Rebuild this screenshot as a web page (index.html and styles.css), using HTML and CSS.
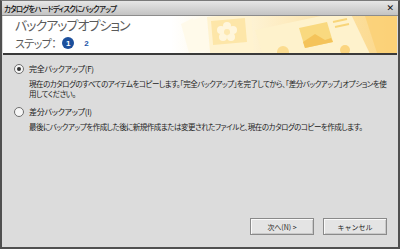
FILE: index.html
```html
<!DOCTYPE html>
<html lang="ja">
<head>
    <meta charset="UTF-8">
    <title>カタログをハードディスクにバックアップ</title>
    <link rel="stylesheet" href="styles.css">
</head>
<body>
    <div class="window">
        <div class="titlebar">
            <span class="title">カタログをハードディスクにバックアップ</span>
            <span class="close">&#x2715;</span>
        </div>

        <!-- Header -->
        <div class="header">
            <div class="header-text">
                <div class="heading">バックアップオプション</div>
                <div class="steps">
                    <span class="step-label">ステップ：</span>
                    <span class="step current">1</span>
                    <span class="step">2</span>
                </div>
            </div>
            <svg class="header-art" width="226" height="37" viewBox="0 0 226 37">
                <defs>
                    <linearGradient id="fade" x1="0" x2="1" y1="0" y2="0">
                        <stop offset="0" stop-color="#ffffff"/>
                        <stop offset="0.3" stop-color="#fef5da"/>
                        <stop offset="1" stop-color="#fbd685"/>
                    </linearGradient>
                </defs>
                <rect width="226" height="37" fill="url(#fade)"/>
                <g fill="#fffaea">
                    <polygon points="10,8 22,2 30,34 18,37"/>
                    <polygon points="22,4 34,0 38,32 28,36"/>
                </g>
                <rect x="36" y="1" width="44" height="42" fill="#fff3d0" transform="rotate(-5 36 1)"/>
                <rect x="40" y="5" width="34" height="24" fill="#fde6a8" transform="rotate(-5 40 5)"/>
                <g fill="#fff6dc">
                    <circle cx="56" cy="10" r="4"/>
                    <circle cx="50" cy="14" r="4"/>
                    <circle cx="62" cy="14" r="4"/>
                    <circle cx="52" cy="21" r="4"/>
                    <circle cx="60" cy="21" r="4"/>
                </g>
                <circle cx="56" cy="16" r="3" fill="#fde8b0"/>
                <polygon points="84,14 178,-6 200,40 96,52" fill="#fef2cc"/>
                <polygon points="128,12 156,6 162,26 134,32" fill="#f9d97f"/>
                <polygon points="132,26 144,18 154,24 160,22 162,26 134,32" fill="#f4c35a"/>
                <g stroke="#f8d57a" stroke-width="2">
                    <line x1="162" y1="6" x2="176" y2="3"/>
                    <line x1="164" y1="11" x2="178" y2="8"/>
                </g>
                <circle cx="112" cy="36" r="6" fill="#fbdc90"/>
                <circle cx="174" cy="34" r="5" fill="#fbd57f"/>
                <polygon points="194,0 226,0 226,37 206,37" fill="#fbcf70" opacity="0.7"/>
            </svg>
        </div>

        <!-- Options -->
        <div class="content">
            <div class="option">
                <label class="radio-row"><span class="radio checked"></span>完全バックアップ(F)</label>
                <p class="desc">現在のカタログのすべてのアイテムをコピーします。「完全バックアップ」を完了してから、「差分バックアップ」オプションを使用してください。</p>
            </div>
            <div class="option">
                <label class="radio-row"><span class="radio"></span>差分バックアップ(I)</label>
                <p class="desc">最後にバックアップを作成した後に新規作成または変更されたファイルと、現在のカタログのコピーを作成します。</p>
            </div>
        </div>

        <div class="buttons">
            <button class="btn">次へ(N) &gt;</button>
            <button class="btn">キャンセル</button>
        </div>
    </div>
</body>
</html>
```

FILE: styles.css
```css
html, body {
    margin: 0;
    padding: 0;
    width: 400px;
    height: 249px;
    overflow: hidden;
}
body {
    font-family: "Noto Sans CJK JP", sans-serif;
    font-feature-settings: "palt";
    color: #222;
}
.window {
    box-sizing: border-box;
    width: 400px;
    height: 249px;
    display: flex;
    flex-direction: column;
    background: #dcdcdc;
    border: 2px solid #505050;
    border-top: 1px solid #7a7a7a;
}
.titlebar {
    height: 14px;
    display: flex;
    align-items: center;
    justify-content: space-between;
    padding: 0 4px 0 2px;
    background: linear-gradient(#e6e6e6, #c3c3c3);
    border-bottom: 1px solid #8c8c8c;
}
.title {
    font-size: 7.5px;
    font-weight: 500;
    letter-spacing: -0.8px;
    color: #111;
}
.close {
    font-size: 9px;
    font-weight: bold;
    color: #111;
    font-family: "DejaVu Sans", sans-serif;
}
.header {
    display: flex;
    margin: 0 1px;
    height: 37px;
    background: #fff;
    border-bottom: 2px solid #3a3a3a;
}
.header-text {
    flex: 1;
    padding: 0 0 0 12px;
}
.heading {
    font-size: 13px;
    line-height: 17px;
    color: #5a5a5a;
    letter-spacing: -1px;
}
.steps {
    display: flex;
    align-items: center;
    gap: 6px;
    margin-top: 2px;
}
.step-label {
    font-size: 11px;
    color: #5a5a5a;
    letter-spacing: -0.6px;
}
.step {
    font-family: "Liberation Sans", sans-serif;
    font-size: 8px;
    font-weight: bold;
    color: #1a55a8;
}
.step.current {
    width: 12px;
    height: 12px;
    border-radius: 50%;
    background: #1c4f9c;
    color: #fff;
    display: flex;
    align-items: center;
    justify-content: center;
    margin-right: 4px;
}
.header-art {
    display: block;
}
.content {
    flex: 1;
    padding: 8px 0 0 12px;
}
.option {
    margin-bottom: 7px;
}
.radio-row {
    display: flex;
    align-items: center;
    font-size: 8px;
    line-height: 12px;
    letter-spacing: -0.3px;
}
.radio {
    box-sizing: border-box;
    width: 10px;
    height: 10px;
    border: 1px solid #6e6e6e;
    border-radius: 50%;
    background: #f6f6f6;
    margin-right: 5px;
    position: relative;
}
.radio.checked::after {
    content: "";
    position: absolute;
    left: 2px;
    top: 2px;
    width: 4px;
    height: 4px;
    border-radius: 50%;
    background: #333;
}
.desc {
    margin: 4px 0 0 15px;
    font-size: 7.5px;
    line-height: 10px;
    letter-spacing: -0.5px;
    width: 362px;
}
.buttons {
    display: flex;
    justify-content: flex-end;
    gap: 9px;
    padding: 0 11px 12px 0;
}
.btn {
    width: 64px;
    height: 17px;
    padding: 0;
    font-family: "Noto Sans CJK JP", sans-serif;
    font-size: 7px;
    color: #222;
    background: #e4e4e4;
    border: 1px solid #8a8a8a;
    box-shadow: inset 1px 1px 0 #fafafa, inset -1px -1px 0 #c8c8c8;
}
```
